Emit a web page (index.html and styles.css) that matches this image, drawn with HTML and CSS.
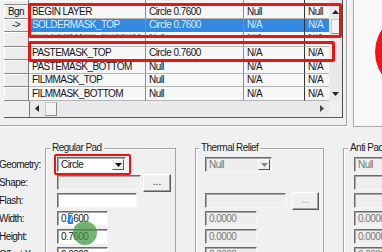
FILE: index.html
```html
<!DOCTYPE html>
<html lang="en">
<head>
    <meta charset="UTF-8">
    <title>Padstack Designer - Layers</title>
    <link rel="stylesheet" href="styles.css">
</head>
<body>
<div class="screen">
    <!-- Layer grid -->
    <div class="top">
        <div class="grid-panel">
            <div class="grid">
                <div class="grid-main">
                    <div class="rows">
                        <div class="colhead"><span class="rh"></span><span class="c c1"></span><span class="c c2"></span><span class="c c3"></span><span class="c c4"></span></div>
                        <div class="row"><span class="rh">Bgn</span><span class="c c1">BEGIN LAYER</span><span class="c c2">Circle 0.7600</span><span class="c c3">Null</span><span class="c c4">Null</span></div>
                        <div class="row sel"><span class="rh">-&gt;</span><span class="c c1">SOLDERMASK_TOP</span><span class="c c2">Circle 0.7600</span><span class="c c3">N/A</span><span class="c c4">N/A</span></div>
                        <div class="row squash"><span class="rh"></span><span class="c c1"><i>SOLDERMASK_BOTTOM</i></span><span class="c c2"><i>Null</i></span><span class="c c3"><i>N/A</i></span><span class="c c4"><i>N/A</i></span></div>
                        <div class="row"><span class="rh"></span><span class="c c1">PASTEMASK_TOP</span><span class="c c2">Circle 0.7600</span><span class="c c3">N/A</span><span class="c c4">N/A</span></div>
                        <div class="row"><span class="rh"></span><span class="c c1">PASTEMASK_BOTTOM</span><span class="c c2">Null</span><span class="c c3">N/A</span><span class="c c4">N/A</span></div>
                        <div class="row"><span class="rh"></span><span class="c c1">FILMMASK_TOP</span><span class="c c2">Null</span><span class="c c3">N/A</span><span class="c c4">N/A</span></div>
                        <div class="row"><span class="rh"></span><span class="c c1">FILMMASK_BOTTOM</span><span class="c c2">Null</span><span class="c c3">N/A</span><span class="c c4">N/A</span></div>
                    </div>
                    <div class="vscroll">
                        <div class="sb-btn"><svg width="7" height="4" viewBox="0 0 7 4"><polygon points="3.5,0 7,4 0,4" fill="#222"/></svg></div>
                        <div class="sb-thumb"></div>
                        <div class="sb-track"></div>
                        <div class="sb-btn"><svg width="7" height="4" viewBox="0 0 7 4"><polygon points="0,0 7,0 3.5,4" fill="#222"/></svg></div>
                    </div>
                </div>
                <div class="hscroll-row">
                    <div class="rh-blank"></div>
                    <div class="hscroll">
                        <div class="sb-btn h"><svg width="4" height="7" viewBox="0 0 4 7"><polygon points="4,0 4,7 0,3.5" fill="#222"/></svg></div>
                        <div class="sb-thumb h"></div>
                        <div class="sb-track"></div>
                        <div class="sb-btn h"><svg width="4" height="7" viewBox="0 0 4 7"><polygon points="0,0 4,3.5 0,7" fill="#444"/></svg></div>
                    </div>
                    <div class="corner"></div>
                </div>
            </div>
        </div>
        <div class="side"></div>
    </div>

    <!-- Pad definitions -->
    <div class="lower">
        <div class="labels">
            <div class="lbl">Geometry:</div>
            <div class="lbl">Shape:</div>
            <div class="lbl">Flash:</div>
            <div class="lbl">Width:</div>
            <div class="lbl">Height:</div>
            <div class="lbl">Offset X:</div>
        </div>

        <fieldset class="group regular">
            <legend>Regular Pad</legend>
            <div class="group-body">
                <div class="frow"><div class="field combo w69"><span>Circle</span><span class="drop"><svg width="7" height="4" viewBox="0 0 7 4"><polygon points="0,0 7,0 3.5,4" fill="#111"/></svg></span></div></div>
                <div class="frow"><div class="field off w84"></div><div class="dots">...</div></div>
                <div class="frow"><div class="field w80"></div></div>
                <div class="frow"><div class="field w51">0.<span class="hl">7</span>600</div></div>
                <div class="frow"><div class="field w51">0.7600</div></div>
                <div class="frow"><div class="field w51">0.0000</div></div>
            </div>
        </fieldset>

        <fieldset class="group thermal">
            <legend>Thermal Relief</legend>
            <div class="group-body">
                <div class="frow"><div class="field combo off w67"><span>Null</span><span class="drop"><svg width="7" height="4" viewBox="0 0 7 4"><polygon points="0,0 7,0 3.5,4" fill="#888"/></svg></span></div></div>
                <div class="frow"></div>
                <div class="frow"><div class="field off w81"></div><div class="dots off">...</div></div>
                <div class="frow"><div class="field off w52">0.0000</div></div>
                <div class="frow"><div class="field off w52">0.0000</div></div>
                <div class="frow"><div class="field off w52">0.0000</div></div>
            </div>
        </fieldset>

        <fieldset class="group anti">
            <legend>Anti Pad</legend>
            <div class="group-body">
                <div class="frow"><div class="field combo off w67"><span>Null</span></div></div>
                <div class="frow"><div class="field off w67"></div></div>
                <div class="frow"><div class="field off w67"></div></div>
                <div class="frow"><div class="field off w52">0.0000</div></div>
                <div class="frow"><div class="field off w52">0.0000</div></div>
                <div class="frow"><div class="field off w52">0.0000</div></div>
            </div>
        </fieldset>
    </div>

    <!-- annotations drawn over the capture -->
    <div class="mark mark-top"></div>
    <div class="mark mark-paste"></div>
    <div class="mark mark-geo"></div>
    <div class="blob"></div>
    <div class="click"></div>
</div>
</body>
</html>
```

FILE: styles.css
```css
body {
    margin: 0;
    background: #f0f0f0;
    font-family: "Liberation Sans", Arial, sans-serif;
    font-size: 10px;
    letter-spacing: -0.55px;
    color: #141414;
}

.screen {
    position: relative;
    width: 382px;
    height: 252px;
    overflow: hidden;
}

/* ---------- grid ---------- */
.top {
    display: flex;
    height: 127px;
}

.grid-panel {
    box-sizing: border-box;
    width: 347px;
    height: 126px;
    padding-left: 4px;
    border-right: 1px solid #a0a0a0;
    border-bottom: 1px solid #a0a0a0;
    box-shadow: 1px 1px 0 #fff;
}

.grid {
    width: 338px;
    border-right: 1px solid #4a4a4a;
    border-bottom: 1px solid #5a5a5a;
}

.grid-main {
    display: flex;
}

.rows {
    width: 325px;
}

.colhead, .row {
    display: flex;
    height: 13.5px;
}

.colhead {
    height: 5px;
}

.row.squash {
    height: 14.5px;
}

.rh, .c {
    box-sizing: border-box;
    display: flex;
    align-items: center;
    white-space: nowrap;
    overflow: hidden;
}

.rh {
    width: 25px;
    justify-content: center;
    background: #ececec;
    border-right: 1px solid #7a7a7a;
    border-bottom: 1px solid #8a8a8a;
    box-shadow: inset 1px 1px 0 #fff;
}

.c {
    padding-left: 3px;
    background: #f7f7f7;
    border-right: 1px solid #8c8c8c;
    border-bottom: 1px solid #b4b4b4;
}

.colhead .c {
    background: #f3f3f3;
    border-bottom-color: #777;
}

.c1 { width: 117px; }
.c2 { width: 98px; }
.c3 { width: 61px; border-right-color: #333; }
.c4 { width: 24px; border-right: none; }

.row.sel .c {
    background: #3388df;
    color: #d8ecff;
    border-bottom-color: #3388df;
}

.row.squash .c i {
    font-style: normal;
    display: inline-block;
    transform: scaleY(0.4);
    transform-origin: 0 0;
    margin-top: 1px;
    align-self: flex-start;
    color: #555;
}

/* scrollbars */
.vscroll {
    width: 13px;
    display: flex;
    flex-direction: column;
    padding-top: 5px;
    background: #e9e9e9;
}

.sb-btn {
    height: 13px;
    display: flex;
    align-items: center;
    justify-content: center;
    flex: none;
}

.sb-thumb {
    height: 13px;
    margin: 1px 1px 0 2px;
    background: #f4f4f4;
    border: 1px solid #c8c8c8;
    border-right-color: #8a8a8a;
    border-bottom-color: #8a8a8a;
    flex: none;
}

.sb-track {
    flex: 1;
}

.hscroll-row {
    display: flex;
    height: 16px;
}

.rh-blank {
    width: 25px;
    background: #f0f0f0;
}

.hscroll {
    width: 300px;
    display: flex;
    background: #e9e9e9;
    border-left: 1px solid #777;
    box-sizing: border-box;
}

.sb-btn.h {
    width: 14px;
    height: auto;
}

.sb-thumb.h {
    width: 10px;
    height: auto;
    margin: 1px 0 1px 1px;
}

.corner {
    width: 13px;
    background: #efefef;
}

.side {
    flex: 1;
    margin-left: 6px;
    background: #f8f8f8;
    border-left: 1px solid #a8a8a8;
    border-bottom: 1px solid #a8a8a8;
}

/* ---------- pad groups ---------- */
.lower {
    display: flex;
    align-items: flex-start;
}

.labels {
    width: 45px;
    flex: none;
    padding-top: 30px;
    margin-left: -1px;
}

.lbl {
    height: 15px;
    line-height: 15px;
    margin-bottom: 3px;
    white-space: nowrap;
}

.group {
    box-sizing: border-box;
    flex: none;
    margin: 15px 0 0;
    padding: 0;
    min-width: 0;
    height: 140px;
    border: 1px solid #a4a4a4;
    box-shadow: inset 1px 1px 0 #fff;
}

.group legend {
    padding: 0 2px;
    line-height: 12px;
    color: #1c1c1c;
}

.group-body {
    padding-top: 3px;
}

.regular { width: 131px; margin-left: 1px; }
.regular legend { margin-left: 4px; }
.regular .group-body { padding-left: 11px; }

.thermal { width: 129px; margin-left: 19px; }
.thermal legend { margin-left: 3px; }
.thermal .group-body { padding-left: 9px; }

.anti { width: 60px; margin-left: 19px; }
.anti legend { margin-left: 4px; }
.anti .group-body { padding-left: 10px; }

.frow {
    display: flex;
    align-items: center;
    height: 15px;
    margin-bottom: 3px;
}

.field {
    box-sizing: border-box;
    flex: none;
    height: 15px;
    line-height: 13px;
    padding-left: 3px;
    background: #fff;
    border: 1px solid;
    border-color: #6c6c6c #f6f6f6 #f6f6f6 #6c6c6c;
    box-shadow: inset 1px 1px 0 #a9a9a9;
    white-space: nowrap;
    overflow: hidden;
}

.field.off {
    background: #eeeeee;
    color: #777;
}

.w51 { width: 51px; }
.w52 { width: 52px; }
.w67 { width: 67px; }
.w69 { width: 69px; }
.w80 { width: 80px; }
.w81 { width: 81px; }
.w84 { width: 84px; }

.combo {
    display: flex;
    justify-content: space-between;
    padding-right: 1px;
}

.drop {
    box-sizing: border-box;
    width: 12px;
    height: 11px;
    margin-top: 1px;
    display: flex;
    align-items: center;
    justify-content: center;
    background: #f0f0f0;
    border: 1px solid;
    border-color: #fff #555 #555 #fff;
}

.hl {
    background: #2f7fe0;
    color: #fff;
}

.dots {
    box-sizing: border-box;
    flex: none;
    width: 28px;
    height: 18px;
    margin-left: 2px;
    text-align: center;
    line-height: 14px;
    letter-spacing: 0;
    background: #f0f0f0;
    border: 1px solid;
    border-color: #fff #5a5a5a #5a5a5a #fff;
    box-shadow: inset -1px -1px 0 #a0a0a0;
}

.dots.off {
    width: 27px;
    margin-left: 6px;
    color: #9a9a9a;
}

/* ---------- annotations ---------- */
.mark {
    position: absolute;
    box-sizing: border-box;
    border: 3px solid #ee1313;
    border-radius: 2px;
}

.mark-top {
    left: 28px;
    top: 3px;
    width: 314px;
    height: 35px;
}

.mark-paste {
    left: 28px;
    top: 41px;
    width: 307px;
    height: 21px;
}

.mark-geo {
    left: 54px;
    top: 154px;
    width: 77px;
    height: 21px;
    border-width: 2.5px;
}

.blob {
    position: absolute;
    left: 375px;
    top: 12px;
    width: 80px;
    height: 80px;
    border-radius: 50%;
    background: #f01414;
}

.click {
    position: absolute;
    left: 73px;
    top: 221px;
    width: 24px;
    height: 24px;
    border-radius: 50%;
    background: rgba(64, 150, 64, 0.72);
}
```
